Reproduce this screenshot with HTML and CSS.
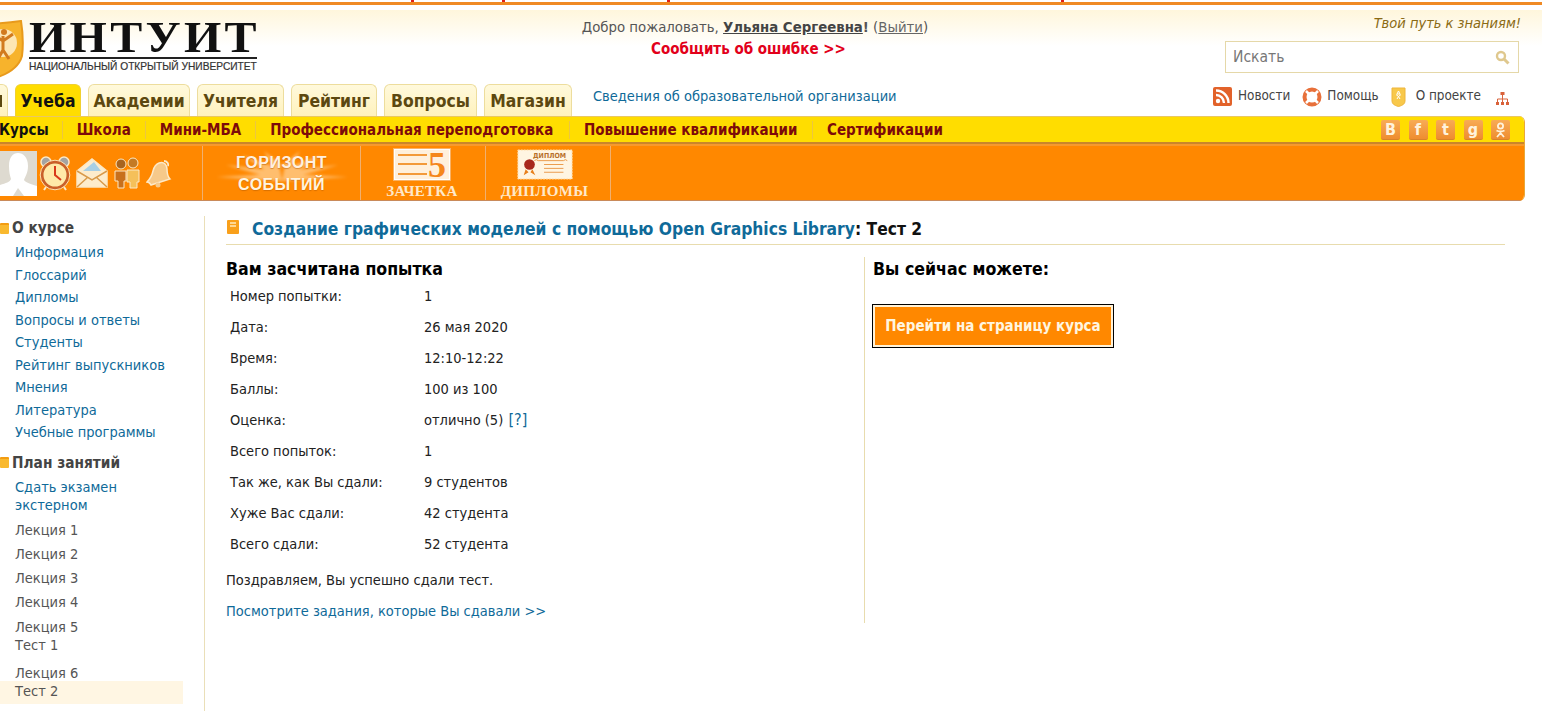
FILE: index.html
```html
<!DOCTYPE html>
<html lang="ru">
  <head>
    <meta charset="UTF-8">
    <meta name="viewport" content="width=device-width, initial-scale=1.0">
    <title>ИНТУИТ - Тест 2</title>
    <link rel="stylesheet" href="styles.css">
  </head>
  <body>
    <div class="top-line"></div>

    <header class="head">
      <a class="logo" href="#">
        <svg class="logo-shield" width="24" height="58" viewBox="0 0 24 58">
          <path d="M-24 4 Q0 4 21 1 Q24 20 22 36 Q18 50 -2 57 Q-20 50 -24 36Z" fill="#f7b32c" stroke="#e89a1c" stroke-width="2"/>
          <circle cx="3" cy="23" r="14" fill="#fde6b4"/>
          <path d="M3 16v14M3 30l-5 9M3 30l6 9M-6 15l9 6 10-7" fill="none" stroke="#d27a1e" stroke-width="3"/>
          <circle cx="4" cy="12" r="3" fill="#d27a1e"/>
        </svg>
        <span class="logo-text">
          <span class="logo-name">ИНТУИТ</span>
          <span class="logo-sub">НАЦИОНАЛЬНЫЙ ОТКРЫТЫЙ УНИВЕРСИТЕТ</span>
        </span>
      </a>
      <div class="welcome">
        <p class="hello">Добро пожаловать, <a class="user" href="#">Ульяна Сергеевна</a><b>!</b> (<a class="logout" href="#">Выйти</a>)</p>
        <p class="report">Сообщить об ошибке &gt;&gt;</p>
      </div>
      <div class="head-right">
        <p class="slogan">Твой путь к знаниям!</p>
        <div class="search">
          <span>Искать</span>
          <svg width="15" height="15" viewBox="0 0 15 15"><circle cx="6" cy="6" r="4" fill="none" stroke="#dfc88e" stroke-width="2.4"/><path d="M9 9l4.500 4.500" stroke="#dfc88e" stroke-width="3"/></svg>
        </div>
      </div>
    </header>

    <div class="tab-row">
      <nav class="tabs">
        <a class="tab tab-cut" href="#"></a>
        <a class="tab active" href="#">Учеба</a>
        <a class="tab" href="#">Академии</a>
        <a class="tab" href="#">Учителя</a>
        <a class="tab" href="#">Рейтинг</a>
        <a class="tab" href="#">Вопросы</a>
        <a class="tab" href="#">Магазин</a>
      </nav>
      <a class="org-link" href="#">Сведения об образовательной организации</a>
      <div class="tools">
        <svg class="tool-icon" width="19" height="19" viewBox="0 0 19 19"><rect width="19" height="19" rx="2" fill="#e2622a"/><circle cx="5" cy="14" r="2.200" fill="#fff"/><path d="M3 8a8 8 0 0 1 8 8M3 3.500a12.500 12.500 0 0 1 12.500 12.500" fill="none" stroke="#fff" stroke-width="2.400"/></svg>
        <a href="#">Новости</a>
        <svg class="tool-icon help-icon" width="20" height="20" viewBox="0 0 20 20"><circle cx="10" cy="10" r="7.500" fill="none" stroke="#e8703a" stroke-width="4"/><path d="M4 4l3 3M16 4l-3 3M4 16l3-3M16 16l-3-3" stroke="#fff" stroke-width="2.500"/></svg>
        <a class="help-link" href="#">Помощь</a>
        <svg class="tool-icon medal-icon" width="15" height="20" viewBox="0 0 15 20"><path d="M1 1h13v13q0 4-6.500 5.500Q1 18 1 14z" fill="#f8c84a" stroke="#eeb53a"/><path d="M7.500 4l1.500 3h-3zM5 7.500l2.500 2 2.500-2M6 12l1.500-2.500L9 12" fill="none" stroke="#fff" stroke-width="1"/></svg>
        <a class="about" href="#">О проекте</a>
        <svg class="map-icon" width="15" height="15" viewBox="0 0 15 15"><path d="M7.500 4v4M2.500 11V8h10v3M7.500 8v3" fill="none" stroke="#d9623a"/><rect x="5.500" y="1" width="4" height="3" fill="#d9623a"/><rect x="1" y="11" width="3" height="3" fill="#d9623a"/><rect x="6" y="11" width="3" height="3" fill="#d9623a"/><rect x="11" y="11" width="3" height="3" fill="#d9623a"/></svg>
      </div>
    </div>

    <div class="menu-box">
      <div class="sub-bar">
        <nav class="sub-nav">
          <a class="current" href="#">Курсы</a>
          <a href="#">Школа</a>
          <a href="#">Мини-МБА</a>
          <a href="#">Профессиональная переподготовка</a>
          <a href="#">Повышение квалификации</a>
          <a href="#">Сертификации</a>
        </nav>
        <div class="socials">
          <a href="#">В</a>
          <a href="#">f</a>
          <a href="#">t</a>
          <a href="#">g</a>
          <a href="#"><svg width="11" height="16" viewBox="0 0 11 16"><circle cx="5.500" cy="4" r="2.600" fill="none" stroke="#fff3dc" stroke-width="1.800"/><path d="M1.500 8.500q4 2 8 0M5.500 10v1M5.500 11l-3.500 4M5.500 11l3.500 4" fill="none" stroke="#fff3dc" stroke-width="1.800"/></svg></a>
        </div>
      </div>
      <div class="orange-bar">
        <div class="personal">
          <div class="avatar">
            <svg width="37" height="45" viewBox="0 0 37 45"><path d="M0 0h37v45H0z" fill="#dedad0"/><path d="M9 15c0-9 4-13 9-13s10 4 10 13c0 7-3 11-4 14 1 2 6 4 13 6v10H0V34c6-2 10-3 11-6-1-3-2-7-2-13z" fill="#fff"/><path d="M13 45l5-8 6 8z" fill="#dedad0"/></svg>
          </div>
          <svg class="bar-icon" width="32" height="36" viewBox="0 0 32 36"><circle cx="7" cy="7" r="5" fill="#a3a3a3" stroke="#fbe8c6" stroke-width="1.500"/><circle cx="25" cy="7" r="5" fill="#a3a3a3" stroke="#fbe8c6" stroke-width="1.500"/><circle cx="16" cy="20" r="13" fill="#ffe9a8" stroke="#c9602a" stroke-width="3"/><circle cx="16" cy="20" r="14.800" fill="none" stroke="#fbe0b4"/><path d="M16 11v9l6 5" fill="none" stroke="#d8381a" stroke-width="2"/><path d="M7 32l-2 3M25 32l2 3" stroke="#fbe8c6" stroke-width="2"/></svg>
          <svg class="bar-icon" width="32" height="32" viewBox="0 0 32 32"><path d="M1 14L16 2l15 12v16H1z" fill="#fdeccc" stroke="#fbe8c6" stroke-width="1.500"/><path d="M7 14L18 5l7 9z" fill="#a8cfe4"/><path d="M1 14l15 9 15-9M1 30l11-10M31 30L20 20" fill="none" stroke="#d99a4a" stroke-width="1.500"/></svg>
          <svg class="bar-icon" width="28" height="32" viewBox="0 0 28 32"><circle cx="8" cy="7" r="5" fill="#a8641f" stroke="#fbe8c6"/><circle cx="20" cy="6" r="5" fill="#c47a24" stroke="#fbe8c6"/><path d="M2 14h11v10h-2v7H5v-7H2z" fill="#c8701c" stroke="#fbe8c6"/><path d="M14 13h12v12h-2v6h-7v-6h-3z" fill="#f5c05a" stroke="#fbe8c6"/></svg>
          <svg class="bar-icon" width="26" height="30" viewBox="0 0 26 30"><path d="M18 3c3 0 5 3 4 5" fill="none" stroke="#fbe8c6" stroke-width="2"/><path d="M13 5c5-2 8 2 8 6 0 5 1 8 3 10L5 27c-1-2-3-3-4-3 3-3 5-6 6-11 1-4 3-7 6-8z" fill="#f6c98a" stroke="#fde9c8" stroke-width="1.500"/><circle cx="12" cy="27" r="2.500" fill="#f6c98a"/></svg>
        </div>
        <a class="bar-cell horizon" href="#">
          <svg class="rays" width="140" height="44" viewBox="0 0 140 44"><path d="M70 34L4 30l60-3zM70 34L14 18l52 6zM70 34L30 8l38 14zM70 34L52 4l22 18zM70 34l66-4-60-3zM70 34l56-16-52 6zM70 34l40-26-38 14zM70 34L88 4 66 22z" fill="#ffe2b8"/></svg>
          <span class="horizon-text"><span class="horizon-top">ГОРИЗОНТ</span><br>СОБЫТИЙ</span>
        </a>
        <a class="bar-cell record" href="#">
          <span class="record-card"><i class="lines"></i><b>5</b></span>
          <span class="cell-label">ЗАЧЕТКА</span>
        </a>
        <a class="bar-cell diploma" href="#">
          <svg width="58" height="32" viewBox="0 0 58 32"><rect x="1" y="1" width="56" height="30" fill="#fff5e2" stroke="#ffd9a0" stroke-dasharray="2 1"/><circle cx="13" cy="16" r="5.500" fill="#a8281c"/><path d="M9 21l-2 6 5-3zM16 21l3 6-5-3z" fill="#e8801c"/><path d="M28 16h20M28 20h20M28 24h20M18 12q2-2 4 0h26q2-2 4 0" fill="none" stroke="#ea9a4a"/></svg>
          <span class="diploma-word">ДИПЛОМ</span>
          <span class="cell-label">ДИПЛОМЫ</span>
        </a>
      </div>
    </div>

    <main class="page">
      <aside class="side">
        <h3 class="side-head"><i class="folder"></i>О курсе</h3>
        <ul class="side-list">
          <li><a href="#">Информация</a></li>
          <li><a href="#">Глоссарий</a></li>
          <li><a href="#">Дипломы</a></li>
          <li><a href="#">Вопросы и ответы</a></li>
          <li><a href="#">Студенты</a></li>
          <li><a href="#">Рейтинг выпускников</a></li>
          <li><a href="#">Мнения</a></li>
          <li><a href="#">Литература</a></li>
          <li><a href="#">Учебные программы</a></li>
        </ul>
        <h3 class="side-head plan"><i class="folder"></i>План занятий</h3>
        <ul class="side-list lessons">
          <li class="extern"><a href="#">Сдать экзамен экстерном</a></li>
          <li>Лекция 1</li>
          <li>Лекция 2</li>
          <li>Лекция 3</li>
          <li>Лекция 4</li>
          <li class="with-test">Лекция 5<br>Тест 1</li>
          <li class="last">Лекция 6</li>
          <li class="selected">Тест 2</li>
        </ul>
      </aside>

      <section class="content">
        <h1 class="title">
          <svg width="12" height="14" viewBox="0 0 12 14"><rect width="12" height="14" rx="1" fill="#f9a01b"/><path d="M3 3h6M3 6h6" stroke="#ffe9bb" stroke-width="1.400"/></svg>
          <span><a href="#">Создание графических моделей с помощью Open Graphics Library</a>: Тест 2</span>
        </h1>
        <div class="result">
          <div class="result-left">
            <h2>Вам засчитана попытка</h2>
            <table class="attempt">
              <tr><td>Номер попытки:</td><td>1</td></tr>
              <tr><td>Дата:</td><td>26 мая 2020</td></tr>
              <tr><td>Время:</td><td>12:10-12:22</td></tr>
              <tr><td>Баллы:</td><td>100 из 100</td></tr>
              <tr><td>Оценка:</td><td>отлично (5) <a class="hint" href="#">[?]</a></td></tr>
              <tr><td>Всего попыток:</td><td>1</td></tr>
              <tr><td>Так же, как Вы сдали:</td><td>9 студентов</td></tr>
              <tr><td>Хуже Вас сдали:</td><td>42 студента</td></tr>
              <tr><td>Всего сдали:</td><td>52 студента</td></tr>
            </table>
            <p class="congrats">Поздравляем, Вы успешно сдали тест.</p>
            <p class="tasks"><a href="#">Посмотрите задания, которые Вы сдавали &gt;&gt;</a></p>
          </div>
          <div class="result-right">
            <h2>Вы сейчас можете:</h2>
            <a class="course-btn" href="#">Перейти на страницу курса</a>
          </div>
        </div>
      </section>
    </main>
  </body>
</html>
```

FILE: styles.css
```css
html, body {
  margin: 0;
  padding: 0;
  height: 711px;
  overflow: hidden;
}
body {
  font-family: "DejaVu Sans Condensed", "DejaVu Sans", sans-serif;
  font-size: 14.500px;
  color: #222;
  background: #fff;
}
a {
  color: #0f6a99;
  text-decoration: none;
}
p, h1, h2, h3, ul {
  margin: 0;
  padding: 0;
}
ul {
  list-style: none;
}

/* top strip */
.top-line {
  height: 2px;
  border-bottom: 3px solid #f08a24;
  background:
    linear-gradient(#e0201a, #e0201a) 411px 0 / 3px 2px no-repeat,
    linear-gradient(#e0201a, #e0201a) 502px 0 / 3px 2px no-repeat,
    linear-gradient(#e0201a, #e0201a) 667px 0 / 3px 2px no-repeat,
    linear-gradient(#e0201a, #e0201a) 1061px 0 / 3px 2px no-repeat;
}

/* head */
.head {
  height: 72px;
  margin-top: 5px;
  background: linear-gradient(#fff6dc, #fff 36px);
  display: flex;
}
.logo {
  width: 520px;
  display: flex;
  padding-top: 9px;
  color: #111;
}
.logo-shield {
  flex: none;
  margin-top: 1px;
  overflow: hidden;
}
.logo-text {
  margin-left: 5px;
  display: flex;
  flex-direction: column;
  width: 228px;
}
.logo-name {
  font-family: "Liberation Serif", serif;
  font-weight: bold;
  font-size: 44px;
  line-height: 38px;
  letter-spacing: 3px;
  height: 38px;
  white-space: nowrap;
  transform: scaleX(1.09);
  transform-origin: left top;
}
.logo-sub {
  font-family: "Liberation Sans", Arial, sans-serif;
  font-size: 10.200px;
  line-height: 14px;
  border-top: 2px solid #222;
  padding-top: 1px;
  color: #333;
  -webkit-text-stroke: 0.2px #333;
  white-space: nowrap;
}
.welcome {
  width: 470px;
  text-align: center;
  padding-top: 7px;
}
.hello {
  color: #555;
  font-size: 14.800px;
  line-height: 20px;
}
.hello .user {
  font-weight: bold;
  color: #444;
  text-decoration: underline;
}
.hello .logout {
  color: #666;
  text-decoration: underline;
}
.report {
  margin-top: 2px;
  padding-right: 13px;
  line-height: 20px;
  font-weight: bold;
  font-size: 15px;
  color: #e2001a;
}
.head-right {
  margin-left: auto;
  width: 294px;
  margin-right: 23px;
}
.slogan {
  font-style: italic;
  text-align: right;
  color: #8a6a14;
  line-height: 18px;
  padding-top: 4px;
  margin-right: -2px;
}
.search {
  margin-top: 9px;
  height: 32px;
  box-sizing: border-box;
  border: 1px solid #e5d8a8;
  background: #fff;
  display: flex;
  align-items: center;
  justify-content: space-between;
  padding: 0 8px 0 7px;
  color: #777;
  font-size: 15.500px;
}

/* tabs */
.tab-row {
  height: 33px;
  display: flex;
  margin-top: 1px;
}
.tabs {
  display: flex;
  gap: 7px;
  margin-left: -30px;
  align-items: flex-end;
}
.tab {
  height: 32px;
  box-sizing: border-box;
  border: 1px solid #eddd9d;
  border-bottom: 0;
  border-radius: 6px 6px 0 0;
  background: linear-gradient(#fff9dc, #fff2bd);
  font-weight: bold;
  font-size: 17.400px;
  line-height: 33px;
  color: #5c4810;
  text-align: center;
  white-space: nowrap;
}
.tab.tab-cut {
  width: 38px;
  background:
    linear-gradient(#5c4810, #5c4810) 29px 10px / 2px 12px no-repeat,
    linear-gradient(#fff9dc, #fff2bd);
}
.tab:nth-child(2) { width: 66px; }
.tab:nth-child(3) { width: 102px; }
.tab:nth-child(4) { width: 87px; }
.tab:nth-child(5) { width: 86px; }
.tab:nth-child(6) { width: 93px; }
.tab:nth-child(7) { width: 88px; }
.tab.active {
  background: #ffdd00;
  color: #111;
  border-color: #f0d030;
}
.org-link {
  margin-left: 21px;
  line-height: 26px;
}
.tools {
  margin-left: auto;
  margin-right: 32px;
  display: flex;
  align-items: flex-start;
  font-size: 13.400px;
  line-height: 26px;
  height: 26px;
}
.tools a {
  color: #444;
  margin-left: 6px;
}
.tools .help-link {
  margin-left: 5px;
}
.tool-icon {
  margin-top: 4px;
}
.help-icon,
.medal-icon {
  margin-left: 12px;
}
.tools .about {
  margin-left: 10px;
}
.map-icon {
  margin: 8px 0 0 14px;
}

/* yellow and orange menu */
.menu-box {
  width: 1525px;
  border-radius: 0 6px 6px 0;
  overflow: hidden;
  border-right: 1px solid #e8a83a;
  box-sizing: border-box;
}
.sub-bar {
  height: 28px;
  box-sizing: border-box;
  background: #ffdd00;
  border-top: 1px solid #e9c763;
  border-bottom: 2px solid #c9862a;
  display: flex;
  align-items: center;
  justify-content: space-between;
}
.sub-nav {
  display: flex;
  margin-left: -1px;
}
.sub-nav a {
  font-weight: bold;
  font-size: 15px;
  color: #7d0a0a;
  line-height: 18px;
  padding: 0 14.500px 0 14px;
  border-left: 1px solid #ecc640;
}
.sub-nav a.current {
  color: #111;
  padding: 0 13px 0 0;
  border: 0;
}
.sub-nav a:nth-child(2),
.sub-nav a:nth-child(3) {
  padding-right: 14px;
}
.sub-nav a:nth-child(4) {
  padding-right: 15.500px;
}
.socials {
  display: flex;
  gap: 8.500px;
  margin-right: 14px;
}
.socials a {
  width: 19px;
  height: 20px;
  box-sizing: border-box;
  border-radius: 2px;
  border-bottom: 1px solid #d8822a;
  background: linear-gradient(#f8ab55, #ee8d30);
  color: #fff3dc;
  font-weight: bold;
  font-size: 16px;
  line-height: 19px;
  text-align: center;
}
.socials svg {
  margin-top: 2px;
}
.orange-bar {
  height: 57px;
  box-sizing: border-box;
  background: #ff8800;
  border-top: 2px solid #f79a2c;
  border-bottom: 1px solid #c98a5a;
  display: flex;
}
.personal {
  width: 202px;
  display: flex;
  align-items: center;
}
.avatar {
  height: 45px;
  width: 37px;
  overflow: hidden;
  margin-right: 2px;
}
.bar-icon {
  margin-right: 5px;
}
.bar-cell {
  border-left: 1px solid #f0b070;
  box-sizing: border-box;
  display: flex;
  flex-direction: column;
  align-items: center;
  position: relative;
  color: #ffeccc;
}
.horizon {
  width: 158px;
  justify-content: center;
}
.rays {
  position: absolute;
  left: 9px;
  top: 1px;
  filter: blur(1.500px);
  opacity: 0.6;
}
.horizon-text {
  position: relative;
  font-family: "Liberation Sans", Arial, sans-serif;
  font-weight: bold;
  font-size: 16px;
  line-height: 22px;
  letter-spacing: 0.5px;
  text-align: center;
  color: #fff3df;
  margin-top: 1px;
  text-shadow: 0 1px 1px rgba(180, 90, 0, 0.5);
}
.horizon-top {
  color: #fff0e0;
}
.record {
  width: 125px;
  padding: 3px 2px 0 0;
}
.record-card {
  width: 56px;
  height: 31px;
  box-sizing: border-box;
  border: 1px solid #fff;
  box-shadow: 0 0 0 1px #f9b265;
  display: flex;
  background: #fff0dc;
  padding: 3px 2px 3px 3px;
  align-items: center;
  justify-content: space-between;
}
.lines {
  width: 29px;
  height: 21px;
  border-top: 2px solid #f39a3a;
  border-bottom: 2px solid #f39a3a;
  background: linear-gradient(transparent 7px, #f39a3a 7px, #f39a3a 9px, transparent 9px);
  box-sizing: border-box;
}
.record-card b {
  font-family: "Liberation Serif", serif;
  font-size: 36px;
  line-height: 24px;
  color: #f5861a;
  padding-right: 1px;
}
.cell-label {
  font-family: "Liberation Serif", serif;
  font-weight: bold;
  font-size: 15px;
  line-height: 18px;
  letter-spacing: 0.3px;
  margin-top: 2px;
  color: #ffe8c8;
}
.diploma {
  width: 126px;
  padding: 3px 7px 0 0;
  border-right: 1px solid #f0b070;
}
.diploma-word {
  position: absolute;
  left: 47px;
  top: 5px;
  font-size: 7px;
  line-height: 10px;
  font-weight: bold;
  color: #b8702a;
}

/* page */
.page {
  display: flex;
  margin-top: 15px;
  height: 495px;
}
.side {
  width: 205px;
  box-sizing: border-box;
  border-right: 1px solid #eadfb8;
  flex: none;
  padding-top: 1px;
}
.side-head {
  font-size: 15.300px;
  line-height: 22px;
  font-weight: bold;
  color: #444;
  display: flex;
  align-items: center;
  gap: 3px;
}
.plan {
  margin-top: 8px;
}
.folder {
  width: 9px;
  height: 11px;
  background: #f9b92f;
  border-top: 2px solid #f39c12;
  box-sizing: border-box;
  border-radius: 1px;
  flex: none;
}
.side-list {
  padding-top: 2px;
}
.side-list li {
  padding-left: 15px;
  line-height: 22.500px;
}
.side-list.lessons {
  padding-top: 0;
}
.lessons li {
  line-height: 24px;
  color: #555;
}
.lessons .extern {
  line-height: 18px;
  padding: 4px 30px 4px 15px;
}
.lessons .with-test {
  line-height: 18px;
  padding-top: 4px;
  height: 36px;
}
.lessons .last {
  line-height: 16px;
  padding-top: 11px;
}
.lessons .selected {
  width: 183px;
  box-sizing: border-box;
  height: 23px;
  line-height: 20px;
  background: #fff6e3;
}
.content {
  flex: 1;
  padding: 0 37px 0 21px;
}
.title {
  display: flex;
  align-items: flex-start;
  gap: 13px;
  font-size: 17.300px;
  line-height: 27px;
  height: 29px;
  box-sizing: border-box;
  border-bottom: 1px solid #e8dcae;
  color: #111;
}
.title svg {
  margin-top: 4px;
  margin-left: 1px;
}
.result {
  display: flex;
  margin-top: 12px;
}
.result-left {
  width: 639px;
  box-sizing: border-box;
  border-right: 1px solid #e8dcae;
  height: 366px;
}
.result h2 {
  font-size: 17.600px;
  line-height: 24px;
  color: #000;
}
.attempt {
  border-collapse: collapse;
  margin-top: -1px;
}
.attempt td {
  height: 31px;
  padding: 0 0 0 4px;
}
.attempt td:first-child {
  width: 190px;
}
.hint {
  font-size: 16px;
  margin-left: 1px;
}
.congrats {
  margin-top: 11px;
  line-height: 20px;
}
.tasks {
  margin-top: 11px;
  line-height: 20px;
}
.result-right {
  padding-left: 8px;
}
.course-btn {
  display: inline-block;
  margin-top: 24px;
  height: 42px;
  box-sizing: border-box;
  line-height: 38px;
  background: #ff8800;
  border: 2px solid #fff2d8;
  outline: 1px solid #000;
  font-weight: bold;
  font-size: 15px;
  color: #fff6e0;
  width: 240px;
  text-align: center;
  white-space: nowrap;
}
```
